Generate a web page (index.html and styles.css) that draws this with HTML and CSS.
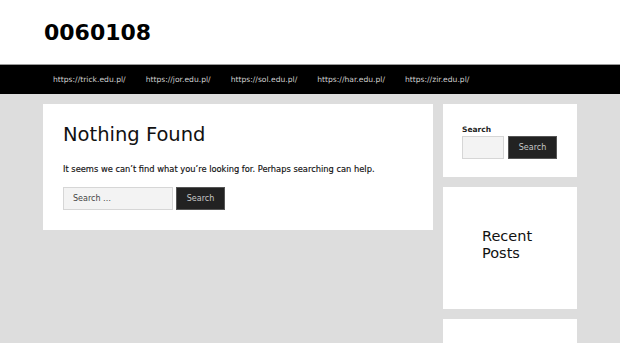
FILE: index.html
```html
<!DOCTYPE html>
<html lang="en">
<head>
<meta charset="utf-8">
<title>0060108</title>
<link rel="stylesheet" href="styles.css">
</head>
<body>
<header class="site-header">
  <div class="container">
    <p class="site-title">0060108</p>
  </div>
</header>
<nav class="main-nav">
  <div class="container nav-inner">
    <a href="#">https://trick.edu.pl/</a>
    <a href="#">https://jor.edu.pl/</a>
    <a href="#">https://sol.edu.pl/</a>
    <a href="#">https://har.edu.pl/</a>
    <a href="#">https://zir.edu.pl/</a>
  </div>
</nav>
<div class="site-content">
  <div class="container layout">
    <main class="content-card">
      <h1 class="page-title">Nothing Found</h1>
      <p class="lead">It seems we can’t find what you’re looking for. Perhaps searching can help.</p>
      <form class="search-form">
        <input class="search-field" type="search" placeholder="Search …">
        <button class="search-btn" type="button">Search</button>
      </form>
    </main>
    <aside class="sidebar">
      <section class="widget widget-search">
        <label class="widget-label">Search</label>
        <div class="widget-row">
          <input class="widget-field" type="search">
          <button class="widget-btn" type="button">Search</button>
        </div>
      </section>
      <section class="widget widget-recent">
        <h2 class="widget-title">Recent Posts</h2>
      </section>
      <section class="widget widget-empty"></section>
    </aside>
  </div>
</div>
</body>
</html>
```
FILE: styles.css
```css
html, body {
  margin: 0;
  padding: 0;
}
body {
  font-family: "DejaVu Sans", Verdana, sans-serif;
  background: #dddddd;
  color: #1b1b1b;
  height: 343px;
  overflow: hidden;
}
.container {
  width: 534px;
  margin: 0 auto;
}
.site-header {
  background: #ffffff;
  height: 64px;
  display: flex;
  align-items: center;
}
.site-title {
  margin: 0;
  padding-left: 1px;
  padding-top: 2px;
  font-weight: bold;
  font-size: 22px;
  color: #000;
  line-height: 1;
}
.main-nav {
  background: #000000;
  height: 30px;
  border-top: 1px solid #9a9a9a;
  box-sizing: border-box;
}
.nav-inner {
  display: flex;
  align-items: center;
  height: 100%;
}
.nav-inner a {
  color: #cfcfcf;
  text-decoration: none;
  font-size: 7.6px;
  padding: 0 10px;
  line-height: 29px;
}
.site-content {
  padding-top: 10px;
}
.layout {
  display: flex;
  gap: 10px;
  align-items: flex-start;
}
.content-card {
  background: #fff;
  width: 390px;
  height: 126px;
  box-sizing: border-box;
  padding: 18px 20px 0 20px;
}
.page-title {
  margin: 0;
  font-weight: normal;
  font-size: 19.5px;
  line-height: 26px;
  color: #111;
}
.lead {
  margin: 14px 0 0;
  font-size: 8.3px;
  line-height: 14px;
  color: #111;
  -webkit-text-stroke: 0.15px #111;
}
.search-form {
  display: flex;
  gap: 3px;
  margin-top: 11px;
}
.search-field {
  width: 110px;
  height: 23px;
  box-sizing: border-box;
  border: 1px solid #d6d6d6;
  background: #f3f3f3;
  padding: 0 9px;
  font-family: inherit;
  font-size: 8px;
  color: #555;
  margin: 0;
}
.search-field::placeholder {
  color: #444;
}
.search-btn, .widget-btn {
  background: #222;
  color: #c8c8c8;
  border: 1px solid #555;
  font-family: inherit;
  font-size: 8px;
  height: 23px;
  width: 49px;
  padding: 0;
  margin: 0;
}
.sidebar {
  width: 134px;
  display: flex;
  flex-direction: column;
  gap: 10px;
}
.widget {
  background: #fff;
  box-sizing: border-box;
}
.widget-search {
  height: 73px;
  padding: 20px 19px 0 19px;
}
.widget-label {
  display: block;
  font-size: 7.5px;
  font-weight: bold;
  color: #222;
  line-height: 11px;
}
.widget-row {
  display: flex;
  gap: 4px;
  margin-top: 1px;
}
.widget-field {
  width: 42px;
  height: 23px;
  box-sizing: border-box;
  border: 1px solid #d6d6d6;
  background: #f3f3f3;
  margin: 0;
  padding: 0;
}
.widget-recent {
  height: 122px;
  padding: 41px 40px 0 39px;
}
.widget-title {
  margin: 0;
  font-weight: normal;
  font-size: 14.5px;
  line-height: 17px;
  color: #111;
}
.widget-empty {
  height: 40px;
}
```
